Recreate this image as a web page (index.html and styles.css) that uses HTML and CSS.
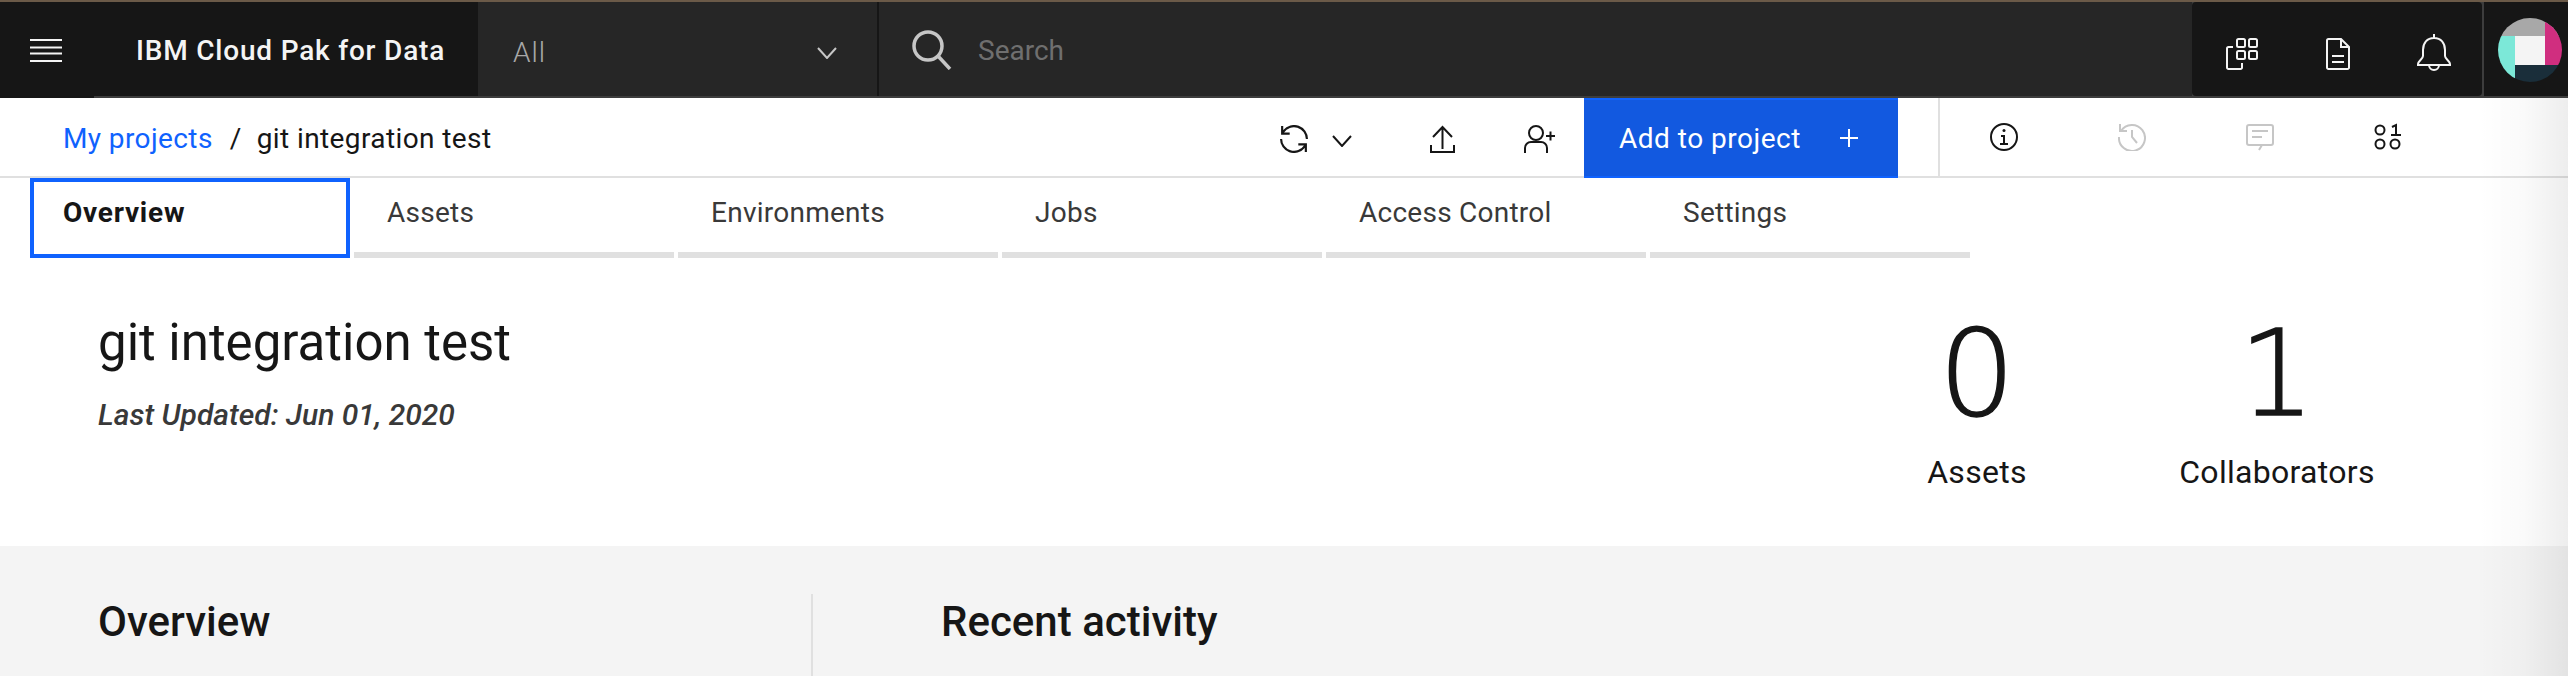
FILE: index.html
```html
<!DOCTYPE html>
<html lang="en">
<head>
<meta charset="UTF-8">
<title>git integration test</title>
<link rel="stylesheet" href="styles.css">
</head>
<body>
<div class="top-strip"></div>
<header class="nav">
    <div class="nav-menu">
        <svg class="icon-menu" viewBox="0 0 32 24" fill="none" stroke="#f4f4f4" stroke-width="2"><path d="M0 2h32M0 9.500h32M0 15.500h32M0 23h32"/></svg>
    </div>
    <div class="nav-brand">IBM Cloud Pak for Data</div>
    <div class="nav-select">
        <span>All</span>
        <svg class="icon-select" viewBox="0 0 20 12" fill="none" stroke="#c6c6c6" stroke-width="2"><path d="M1 1l9 10 9-10"/></svg>
    </div>
    <div class="nav-search">
        <svg class="icon-search" viewBox="0 0 40 40" fill="none" stroke="#c6c6c6" stroke-width="3.500"><circle cx="16" cy="16" r="14"/><path d="M26 26l12 13"/></svg>
        <span>Search</span>
    </div>
    <div class="nav-icons">
        <svg class="icon-apps" viewBox="0 0 32 32" fill="none" stroke="#f4f4f4" stroke-width="2"><rect x="11" y="1" width="8" height="8" rx="1.500"/><rect x="23" y="1" width="8" height="8" rx="1.500"/><rect x="11" y="13" width="8" height="8" rx="1.500"/><rect x="23" y="13" width="8" height="8" rx="1.500"/><path d="M7 9H2.500A1.500 1.500 0 0 0 1 10.500v19A1.500 1.500 0 0 0 2.500 31h12a1.500 1.500 0 0 0 1.500-1.500V25"/></svg>
        <svg class="icon-doc" viewBox="0 0 24 32" fill="none" stroke="#f4f4f4" stroke-width="2"><path d="M15 1H2.500A1.500 1.500 0 0 0 1 2.500v27A1.500 1.500 0 0 0 2.500 31h19a1.500 1.500 0 0 0 1.500-1.500V9zM15 1v8h8M6 18h12M6 24h12"/></svg>
        <svg class="icon-bell" viewBox="0 0 34 39" fill="none" stroke="#f4f4f4" stroke-width="2"><path d="M17 1v4M17 5C10 5 6 10 6 17v6c0 3-5 5-5 8v1h32v-1c0-3-5-5-5-8v-6c0-7-4-12-11-12zM12 32a5 5 0 0 0 10 0"/></svg>
    </div>
    <div class="nav-user">
        <svg class="avatar" viewBox="0 0 64 64">
            <defs><clipPath id="avatarClip"><circle cx="32" cy="32" r="32"/></clipPath></defs>
            <g clip-path="url(#avatarClip)">
                <rect width="64" height="18" fill="#a8a8a8"/>
                <rect x="47" width="17" height="47" fill="#d02e7f"/>
                <rect y="18" width="17" height="46" fill="#7ce8d8"/>
                <rect x="17" y="47" width="47" height="17" fill="#1a2e3a"/>
                <rect x="17" y="18" width="30" height="29" fill="#f4f4f4"/>
            </g>
        </svg>
    </div>
</header>

<div class="crumbs">
    <a class="crumb-link">My projects</a>
    <span class="crumb-sep">/</span>
    <span class="crumb-current">git integration test</span>
    <div class="toolbar">
        <svg class="icon-sync" viewBox="3 3 26 26" fill="#161616"><path d="M12 10H6.780A11 11 0 0 1 27 16h2A13 13 0 0 0 6 7.680V4H4v8h8zM20 22h5.220A11 11 0 0 1 5 16H3a13 13 0 0 0 23 8.320V28h2v-8h-8z"/></svg>
        <svg class="icon-chev" viewBox="0 0 20 12" fill="none" stroke="#161616" stroke-width="2"><path d="M1 1l9 10 9-10"/></svg>
        <svg class="icon-upload" viewBox="0 0 25 28" fill="none" stroke="#161616" stroke-width="2"><path d="M3 12L12.500 2 22 12M12.500 2v22M1 20v7h23v-7"/></svg>
        <svg class="icon-adduser" viewBox="0 0 31 28" fill="none" stroke="#161616" stroke-width="2"><circle cx="12" cy="8" r="7"/><path d="M1 28v-5a6 6 0 0 1 6-6h10a6 6 0 0 1 6 6v5M22 11h9M26.500 6.500v9"/></svg>
        <button class="btn-add">Add to project<span class="btn-plus"><svg viewBox="0 0 18 18" fill="none" stroke="#fff" stroke-width="2"><path d="M9 0v18M0 9h18"/></svg></span></button>
        <div class="toolbar-sep"></div>
        <svg class="icon-side" viewBox="2 2 28 28" fill="#161616"><path d="M17 22v-8h-4v2h2v6h-3v2h8v-2h-3z"/><path d="M16 8a1.500 1.500 0 1 0 1.500 1.500A1.500 1.500 0 0 0 16 8z"/><path d="M16 30a14 14 0 1 1 14-14 14 14 0 0 1-14 14zm0-26a12 12 0 1 0 12 12A12 12 0 0 0 16 4z"/></svg>
        <svg class="icon-side" viewBox="0 0 28 28" fill="none" stroke="#c6c6c6" stroke-width="2"><path d="M3 8A13 13 0 1 1 1 14M2 1v7h7M14 7v7l5 6"/></svg>
        <svg class="icon-side" viewBox="0 0 28 28" fill="none" stroke="#c6c6c6" stroke-width="2"><path d="M13 27l3-5h9a2 2 0 0 0 2-2V4a2 2 0 0 0-2-2H3a2 2 0 0 0-2 2v16a2 2 0 0 0 2 2h13M6 8h16M6 14h10"/></svg>
        <svg class="icon-side" viewBox="0 0 28 28" fill="none" stroke="#161616" stroke-width="2"><circle cx="6" cy="7" r="4.500"/><circle cx="6" cy="21" r="4.500"/><circle cx="21" cy="21" r="4.500"/><path d="M18 4l4-2v10M17 12h10"/></svg>
    </div>
</div>

<nav class="tabs">
    <div class="tab tab-active">Overview</div>
    <div class="tab">Assets</div>
    <div class="tab">Environments</div>
    <div class="tab">Jobs</div>
    <div class="tab">Access Control</div>
    <div class="tab">Settings</div>
</nav>

<section class="summary">
    <div class="summary-text">
        <h1>git integration test</h1>
        <p>Last Updated: Jun 01, 2020</p>
    </div>
    <div class="stat">
        <div class="stat-num">0</div>
        <div class="stat-label">Assets</div>
    </div>
    <div class="stat">
        <div class="stat-num">1</div>
        <div class="stat-label">Collaborators</div>
    </div>
</section>

<section class="lower">
    <div class="lower-left"><h2>Overview</h2></div>
    <div class="lower-right"><h2>Recent activity</h2></div>
</section>

<div class="edge-shade"></div>
</body>
</html>
```

FILE: styles.css
```css
* {
    box-sizing: border-box;
}
html, body {
    margin: 0;
    height: 676px;
    overflow: hidden;
}
body {
    position: relative;
    font-family: Roboto, "Noto Sans", sans-serif;
    background-color: #fff;
    color: #161616;
}
svg {
    display: block;
    flex: none;
}
.top-strip {
    height: 2px;
    background-color: #6b5a48;
}

/* dark header */
.nav {
    display: flex;
    align-items: flex-start;
    height: 96px;
    background-color: #3d3d3d;
}
.nav-menu {
    width: 94px;
    height: 96px;
    padding: 36px 0 0 30px;
    background-color: #161616;
}
.icon-menu {
    width: 32px;
    height: 24px;
}
.nav-brand {
    width: 384px;
    height: 94px;
    padding: 34px 0 0 42px;
    background-color: #161616;
    color: #f4f4f4;
    font-size: 28px;
    font-weight: 500;
    line-height: 30px;
    letter-spacing: 0.8px;
}
.nav-select {
    display: flex;
    align-items: center;
    justify-content: space-between;
    width: 399px;
    height: 94px;
    padding: 6px 40px 0 35px;
    background-color: #262626;
    color: #a8a8a8;
    font-size: 28px;
    font-weight: 300;
    letter-spacing: 1px;
}
.icon-select {
    width: 20px;
    height: 12px;
    margin-top: 2px;
}
.nav-search {
    display: flex;
    align-items: center;
    gap: 26px;
    width: 1315px;
    height: 94px;
    padding: 2px 0 0 33px;
    border-left: 2px solid #161616;
    background-color: #262626;
    color: #6f6f6f;
    font-size: 28px;
}
.icon-search {
    width: 40px;
    height: 40px;
}
.nav-icons {
    display: flex;
    align-items: center;
    width: 290px;
    height: 94px;
    padding-left: 34px;
    border-radius: 4px;
    background-color: #161616;
}
.icon-apps {
    width: 32px;
    height: 32px;
    margin-top: 10px;
}
.icon-doc {
    width: 24px;
    height: 32px;
    margin: 10px 0 0 68px;
}
.icon-bell {
    width: 34px;
    height: 39px;
    margin: 7px 0 0 67px;
}
.nav-user {
    width: 84px;
    height: 94px;
    margin-left: 2px;
    padding: 16px 0 0 14px;
    background-color: #161616;
}
.avatar {
    width: 64px;
    height: 64px;
}

/* breadcrumb row */
.crumbs {
    display: flex;
    align-items: flex-start;
    height: 80px;
    padding-left: 63px;
    border-bottom: 2px solid #e0e0e0;
    font-size: 28px;
    line-height: 82px;
    letter-spacing: 0.4px;
}
.crumb-link {
    color: #0f62fe;
}
.crumb-sep {
    margin: 0 15px 0 17px;
}
.toolbar {
    display: flex;
    align-items: flex-start;
    margin-left: auto;
    padding-right: 166px;
}
.icon-sync {
    width: 28px;
    height: 28px;
    margin-top: 27px;
}
.icon-chev {
    width: 20px;
    height: 12px;
    margin: 37px 0 0 24px;
}
.icon-upload {
    width: 25px;
    height: 28px;
    margin: 27px 0 0 78px;
}
.icon-adduser {
    width: 31px;
    height: 28px;
    margin: 27px 0 0 69px;
}
.btn-add {
    display: flex;
    align-items: center;
    width: 314px;
    height: 80px;
    margin-left: 29px;
    padding: 0 0 0 35px;
    border: none;
    border-top: 2px solid #0f62fe;
    border-bottom: 2px solid #0f62fe;
    background-color: #1259e0;
    color: #fff;
    font-family: inherit;
    font-size: 28px;
    letter-spacing: 0.5px;
}
.btn-plus {
    width: 18px;
    margin-left: 39px;
}
.toolbar-sep {
    width: 2px;
    height: 78px;
    margin: 0 50px 0 40px;
    background-color: #e0e0e0;
}
.icon-side {
    width: 28px;
    height: 28px;
    margin: 25px 100px 0 0;
}
.icon-side:last-child {
    margin-right: 0;
}

/* tabs */
.tabs {
    display: flex;
    gap: 4px;
    height: 80px;
    padding-left: 30px;
}
.tab {
    width: 320px;
    height: 80px;
    padding: 18px 0 0 33px;
    border-bottom: 6px solid #e0e0e0;
    color: #393939;
    font-size: 28px;
    line-height: 34px;
    letter-spacing: 0.25px;
}
.tab-active {
    padding: 14px 0 0 29px;
    border: 4px solid #0f62fe;
    color: #161616;
    font-weight: 700;
    letter-spacing: 0.75px;
}

/* project summary */
.summary {
    display: flex;
    height: 288px;
    padding: 0 141px 0 98px;
}
.summary-text {
    flex: 1;
    padding-top: 50px;
}
h1 {
    margin: 0;
    font-size: 51px;
    font-weight: 400;
    line-height: 70px;
}
.summary-text p {
    margin: 19px 0 0;
    color: #393939;
    font-size: 30px;
    font-style: italic;
    font-weight: 500;
    line-height: 36px;
}
.stat {
    width: 300px;
    padding-top: 56px;
    text-align: center;
}
.stat-num {
    font-family: "DejaVu Sans", sans-serif;
    font-size: 120px;
    font-weight: 200;
    line-height: 120px;
    -webkit-text-stroke: 1.5px #161616;
}
.stat-label {
    margin-top: 18px;
    font-size: 32px;
    line-height: 40px;
    letter-spacing: 0.3px;
}

/* lower panel */
.lower {
    display: flex;
    height: 130px;
    background-color: #f4f4f4;
}
h2 {
    margin: 0;
    font-size: 42px;
    font-weight: 500;
    line-height: 50px;
}
.lower-left {
    width: 811px;
    padding: 51px 0 0 98px;
}
.lower-right {
    flex: 1;
    margin-top: 48px;
    padding: 3px 0 0 128px;
    border-left: 2px solid #e0e0e0;
}

/* window shadow over the right side of the page */
.edge-shade {
    position: absolute;
    top: 98px;
    right: 0;
    bottom: 0;
    width: 90px;
    background: linear-gradient(to right, rgba(0, 0, 0, 0), rgba(0, 0, 0, 0.02) 50%, rgba(0, 0, 0, 0.07));
    pointer-events: none;
}
```
